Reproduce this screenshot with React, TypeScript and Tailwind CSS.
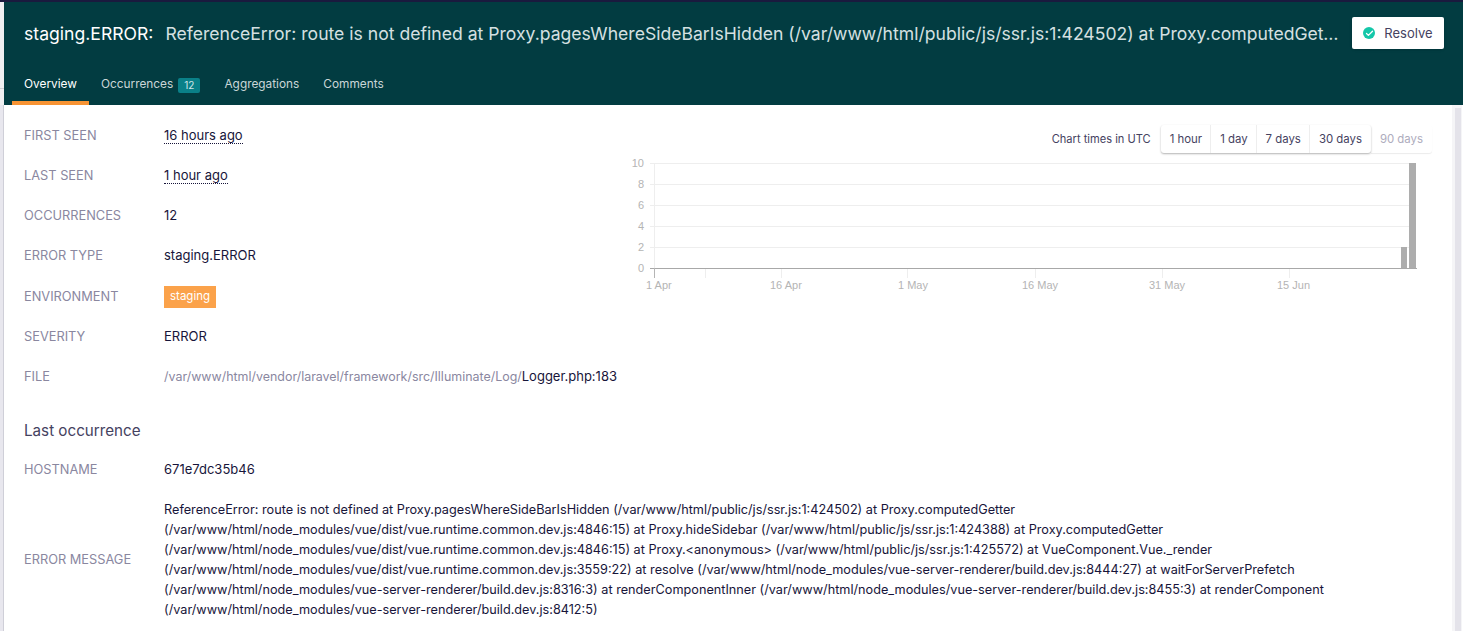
import type { ReactNode } from "react";
import { Check } from "lucide-react";

const tabs = ["1 hour", "1 day", "7 days", "30 days"];

const yTicks: [string, number][] = [
  ["10", 17],
  ["8", 38],
  ["6", 59],
  ["4", 80],
  ["2", 101],
  ["0", 122],
];

const xTicks: [string, number][] = [
  ["1 Apr", 26],
  ["16 Apr", 150],
  ["1 May", 278],
  ["16 May", 402],
  ["31 May", 529],
  ["15 Jun", 657],
];

function Row({ label, children, className }: { label: string; children: ReactNode; className?: string }) {
  return (
    <div className={`flex h-[40px] items-center text-[13px] ${className ?? ""}`}>
      <div className="w-[140px] shrink-0 text-[12.8px] text-[#8a879f]">{label}</div>
      <div className="text-[#17153a]">{children}</div>
    </div>
  );
}

function Chart() {
  return (
    <svg className="h-[150px] w-[800px]" viewBox="0 0 800 150">
      {[13, 34, 55, 76, 97].map((y) => (
        <line key={y} x1="30" x2="796" y1={y + 0.5} y2={y + 0.5} stroke="#eeeeee" />
      ))}
      <line x1="34.5" x2="34.5" y1="13" y2="118" stroke="#eeeeee" />
      {yTicks.map(([t, y]) => (
        <text key={t} x="24" y={y} textAnchor="end" fontSize="11" fill="#b4b4b4" fontFamily="Liberation Sans, sans-serif">
          {t}
        </text>
      ))}
      <line x1="30" x2="797" y1="118.5" y2="118.5" stroke="#a8a8a8" />
      <line x1="34.5" x2="34.5" y1="118" y2="128" stroke="#b5b5b5" />
      {[85.5, 161.5, 287.5, 415.5, 542.5, 669.5].map((x) => (
        <line key={x} x1={x} x2={x} y1="119" y2="128" stroke="#eeeeee" />
      ))}
      <rect x="781" y="97" width="6" height="21" fill="#adadad" />
      <rect x="789" y="13" width="7" height="105" fill="#adadad" />
      {xTicks.map(([t, x]) => (
        <text key={t} x={x} y="139" fontSize="11" fill="#b4b4b4" fontFamily="Liberation Sans, sans-serif">
          {t}
        </text>
      ))}
    </svg>
  );
}

export default function App() {
  return (
    <div className="h-[631px] w-[1463px] overflow-hidden bg-white font-['Inter',sans-serif]">
      <div className="h-[2px] bg-[#1a1a3e]" />
      <div className="flex h-[103px]">
        <div className="w-[4px] shrink-0 bg-[#efeff1] pt-[86px]">
          <div className="h-px bg-[#cfcfd4]" />
        </div>
        <header className="min-w-0 flex-1 bg-[#023c41] text-white">
          <div className="flex h-[62px] items-start pl-[20px] pr-[19px] pt-[15px]">
            <div className="flex h-[34px] min-w-0 flex-1 items-center text-[17.6px]">
              <span className="shrink-0">staging.ERROR:</span>
              <span className="ml-[12px] truncate text-[#d5e0e1]">
                ReferenceError: route is not defined at Proxy.pagesWhereSideBarIsHidden (/var/www/html/public/js/ssr.js:1:424502) at Proxy.computedGetter
              </span>
            </div>
            <button className="ml-[10px] flex h-[32px] w-[92px] shrink-0 items-center justify-center gap-[9px] rounded-[2px] bg-white text-[13px] text-[#45425f] shadow-sm">
              <span className="flex h-[12px] w-[12px] items-center justify-center rounded-full bg-[#14c7a9]">
                <Check className="h-[9px] w-[9px] text-white" strokeWidth={3.5} />
              </span>
              <span className="pt-px">Resolve</span>
            </button>
          </div>
          <nav className="flex h-[41px] px-[8px] text-[11.85px] text-[#c9d6d7]">
            <div className="flex h-full items-center border-b-[4px] border-[#f79333] px-[12px] pt-[5px] text-white">Overview</div>
            <div className="flex h-full items-center px-[12px] pt-px">
              Occurrences
              <span className="ml-[5px] rounded-[2px] bg-[#0a8088] px-[6px] text-[10px] leading-[15px] text-[#cfe6e8]">12</span>
            </div>
            <div className="flex h-full items-center px-[12px] pt-px">Aggregations</div>
            <div className="flex h-full items-center px-[12px] pt-px">Comments</div>
          </nav>
        </header>
      </div>
      <div className="flex h-[526px]">
        <div className="w-[4px] shrink-0 border-r border-[#cfcfd8] bg-[#e8e7ee]" />
        <main className="relative min-w-0 flex-1 pl-[20px] pt-[11px]">
          <Row label="FIRST SEEN">
            <span className="border-b border-dotted border-[#17153a]">16 hours ago</span>
          </Row>
          <Row label="LAST SEEN">
            <span className="border-b border-dotted border-[#17153a]">1 hour ago</span>
          </Row>
          <Row label="OCCURRENCES">12</Row>
          <Row label="ERROR TYPE">staging.ERROR</Row>
          <Row label="ENVIRONMENT" className="mt-[1px]">
            <span className="flex h-[22px] items-center bg-[#fba24a] px-[6px] text-[11.5px] text-white">staging</span>
          </Row>
          <Row label="SEVERITY">ERROR</Row>
          <Row label="FILE">
            <span className="text-[12.45px] text-[#8a879f]">/var/www/html/vendor/laravel/framework/src/Illuminate/Log/</span>
            Logger.php:183
          </Row>
          <h2 className="mt-[24px] h-[20px] text-[15.2px] leading-[20px] text-[#45425f]">Last occurrence</h2>
          <Row label="HOSTNAME" className="mt-[9px]">671e7dc35b46</Row>
          <div className="mt-[10px] flex items-center text-[12.7px]">
            <div className="w-[140px] shrink-0 text-[12.8px] text-[#8a879f]">ERROR MESSAGE</div>
            <div className="w-[1180px] leading-[20px] text-[#17153a]">
              ReferenceError: route is not defined at Proxy.pagesWhereSideBarIsHidden (/var/www/html/public/js/ssr.js:1:424502) at Proxy.computedGetter (/var/www/html/node_modules/vue/dist/vue.runtime.common.dev.js:4846:15) at Proxy.hideSidebar (/var/www/html/public/js/ssr.js:1:424388) at Proxy.computedGetter (/var/www/html/node_modules/vue/dist/vue.runtime.common.dev.js:4846:15) at Proxy.&lt;anonymous&gt; (/var/www/html/public/js/ssr.js:1:425572) at VueComponent.Vue._render (/var/www/html/node_modules/vue/dist/vue.runtime.common.dev.js:3559:22) at resolve (/var/www/html/node_modules/vue-server-renderer/build.dev.js:8444:27) at waitForServerPrefetch (/var/www/html/node_modules/vue-server-renderer/build.dev.js:8316:3) at renderComponentInner (/var/www/html/node_modules/vue-server-renderer/build.dev.js:8455:3) at renderComponent (/var/www/html/node_modules/vue-server-renderer/build.dev.js:8412:5)
            </div>
          </div>
          <div className="absolute right-[20px] top-[20px] flex items-center text-[11.4px] text-[#45425f]">
            <span className="mr-[10px] pt-px text-[11.1px]">Chart times in UTC</span>
            <div className="flex h-[28px] rounded-[3px] bg-white shadow-[0_1px_2px_rgba(0,0,0,0.3)]">
              {tabs.map((t) => (
                <span key={t} className="flex items-center border-r border-[#eeeeee] pl-[9px] pr-[8px] pt-px last:border-r-0 last:pr-[9px]">
                  {t}
                </span>
              ))}
            </div>
            <span className="flex h-[28px] items-center rounded-r-[3px] px-[9px] pt-px text-[#aeacbd] shadow-[0_1px_1px_rgba(0,0,0,0.08)]">90 days</span>
          </div>
          <div className="absolute left-[616px] top-[45px]">
            <Chart />
          </div>
        </main>
        <div className="w-[11px] shrink-0 bg-white">
          <div className="h-full w-[10px] bg-[#f5f5f7] px-[3px] pt-[3px]">
            <div className="h-full w-[6px] bg-[#e4e3ea]" />
          </div>
        </div>
      </div>
    </div>
  );
}
